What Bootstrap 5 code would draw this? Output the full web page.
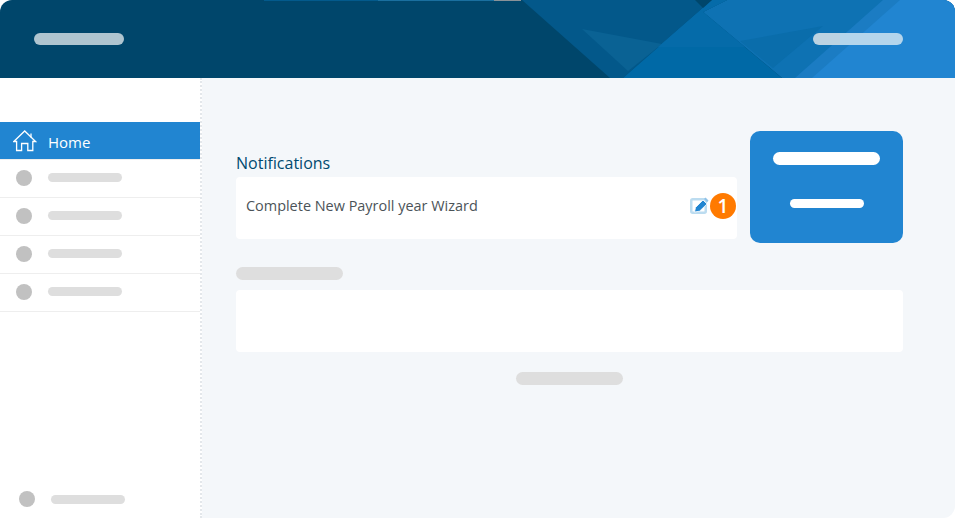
<!DOCTYPE html>
<html lang="en">
<head>
    <meta charset="UTF-8">
    <meta name="viewport" content="width=device-width, initial-scale=1.0">
    <title>Home</title>
    <link href="https://cdn.jsdelivr.net/npm/bootstrap@5.3.0/dist/css/bootstrap.min.css" rel="stylesheet">

    <style>
        html, body {
            height: 100%;
            overflow: hidden;
            background: #fff;
        }
        body {
            font-family: "Open Sans", sans-serif;
        }
        .app-shell {
            width: 955px;
            height: 518px;
        }
        .top-bar {
            height: 78px;
            padding: 0 52px 0 34px;
            background: #00466b;
            border-radius: 12px 12px 0 0;
            overflow: hidden;
        }
        .top-art {
            position: absolute;
            top: 0;
            left: 0;
        }
        .top-pill {
            position: relative;
            width: 90px;
            height: 12px;
            border-radius: 6px;
            background: linear-gradient(90deg, #bcd3e2 0 27px, #b4d5ec 27px);
        }
        .top-pill-left {
            background: #afc5d0;
        }
        .side-bar {
            width: 202px;
            padding-top: 44px;
            border-right: 2px dotted #e3e7eb;
        }
        .side-item {
            height: 38px;
            padding-left: 16px;
            padding-bottom: 2px;
            border-bottom: 1px solid #eeeeee;
        }
        .side-home {
            padding-left: 13px;
            padding-bottom: 0;
            background: #2185d1;
            color: #fff;
            font-size: 15px;
        }
        .side-home svg {
            margin-right: 11px;
        }
        .side-home span {
            margin-top: 3px;
        }
        .side-foot {
            padding: 0 0 11px 19px;
        }
        .dot-grey {
            width: 16px;
            height: 16px;
            border-radius: 50%;
            background: #c1c1c1;
        }
        .bar-grey {
            width: 74px;
            height: 9px;
            margin-left: 16px;
            border-radius: 5px;
            background: #dedede;
        }
        .main-area {
            padding: 53px 52px 0 34px;
            background: #f4f7fa;
            border-radius: 0 0 12px 0;
        }
        .notif-col {
            padding-top: 22px;
        }
        .notif-title {
            margin: 0 0 4px;
            font-size: 16px;
            line-height: 20px;
            font-weight: 400;
            color: #004a70;
        }
        .notif-card {
            height: 62px;
            padding: 0 1px 4px 10px;
            background: #fff;
            border-radius: 4px;
            font-size: 14.45px;
            color: #4b5358;
        }
        .notif-count {
            width: 26px;
            height: 26px;
            margin-left: 1px;
            border-radius: 50%;
            background: #ff7a00;
            color: #fff;
            font-size: 19px;
            font-weight: 600;
            line-height: 26px;
            text-align: center;
        }
        .blue-tile {
            width: 153px;
            height: 112px;
            margin-left: 13px;
            padding-top: 21px;
            background: #2185d1;
            border-radius: 10px;
        }
        .tile-line-a {
            width: 107px;
            height: 13px;
            border-radius: 7px;
            background: #fff;
        }
        .tile-line-b {
            width: 74px;
            height: 9px;
            margin-top: 34px;
            border-radius: 5px;
            background: #fff;
        }
        .bar-wide {
            width: 107px;
            height: 13px;
            border-radius: 7px;
            background: #dedede;
        }
        .bar-first {
            margin-top: 24px;
        }
        .empty-card {
            height: 62px;
            margin: 10px 0 20px;
            background: #fff;
            border-radius: 4px;
        }
    </style>
</head>
<body>
    <div class="app-shell d-flex flex-column">
        <header class="top-bar position-relative d-flex justify-content-between align-items-center flex-shrink-0">
            <svg class="top-art" width="955" height="78" viewBox="0 0 955 78" aria-hidden="true">
                <rect x="264" y="0" width="114" height="1" fill="#035a8c"/>
                <rect x="378" y="0" width="116" height="1" fill="#1a6f9f"/>
                <rect x="494" y="0" width="27" height="1" fill="#8a9298"/>
                <polygon points="522,0 712,0 623,78 610,78" fill="#03588a"/>
                <polygon points="582,29 662,44 628,71" fill="#0a6294"/>
                <polygon points="727,0 955,0 955,78 782,78 703,12" fill="#0e72b3"/>
                <polygon points="712,0 727,0 703,12 782,78 623,78" fill="#0069a6"/>
                <polygon points="712,0 727,0 703,12 745,47 658,47" fill="#056ba9"/>
                <polygon points="695,0 712,0 703,8" fill="#00466b"/>
                <polygon points="740,41 823,26 773,68" fill="#0a6dab"/>
                <polygon points="883,0 955,0 955,78 795,78" fill="#1b7cc3"/>
                <polygon points="900,0 955,0 955,78 812,78" fill="#2185d1"/>
            </svg>
            <div class="top-pill top-pill-left"></div>
            <div class="top-pill"></div>
        </header>

        <div class="d-flex flex-grow-1">
            <aside class="side-bar d-flex flex-column flex-shrink-0">
                <div class="side-item side-home d-flex align-items-center">
                    <svg width="24" height="22" viewBox="0 0 24 22" fill="none" stroke="#fff" stroke-width="1.3" aria-hidden="true">
                        <path d="M0.8 11.5 L11.7 1 L22.6 11.5 H19.8 V20.5 H14.8 V13.5 H8.6 V20.5 H3.6 V11.5 Z"/>
                        <path d="M18 7.5 V3.5"/>
                    </svg>
                    <span>Home</span>
                </div>
                <div class="side-item d-flex align-items-center"><div class="dot-grey"></div><div class="bar-grey"></div></div>
                <div class="side-item d-flex align-items-center"><div class="dot-grey"></div><div class="bar-grey"></div></div>
                <div class="side-item d-flex align-items-center"><div class="dot-grey"></div><div class="bar-grey"></div></div>
                <div class="side-item d-flex align-items-center"><div class="dot-grey"></div><div class="bar-grey"></div></div>
                <div class="side-foot d-flex align-items-center mt-auto"><div class="dot-grey"></div><div class="bar-grey"></div></div>
            </aside>

            <main class="main-area flex-grow-1">
                <div class="d-flex">
                    <div class="flex-grow-1 align-self-start notif-col">
                        <h2 class="notif-title">Notifications</h2>
                        <div class="notif-card d-flex align-items-center">
                            <span class="flex-grow-1">Complete New Payroll year Wizard</span>
                            <svg width="20" height="18" viewBox="0 0 20 18" fill="none" aria-hidden="true">
                                <rect x="2.25" y="2.25" width="14.5" height="13.5" rx="1.5" stroke="#bcdcf0" stroke-width="2.5"/>
                                <polygon points="5.5,15 6.5,10.5 14,3 18,7 10.5,14.2" fill="#2185d1" stroke="#fff" stroke-width="0.8"/>
                                <polygon points="15,2 16.5,0.5 19.5,3.5 18.2,5.2" fill="#8fc2e8"/>
                            </svg>
                            <div class="notif-count">1</div>
                        </div>
                    </div>
                    <div class="blue-tile d-flex flex-column align-items-center flex-shrink-0">
                        <div class="tile-line-a"></div>
                        <div class="tile-line-b"></div>
                    </div>
                </div>
                <div class="bar-wide bar-first"></div>
                <div class="empty-card"></div>
                <div class="bar-wide mx-auto"></div>
            </main>
        </div>
    </div>
    <script src="https://cdn.jsdelivr.net/npm/bootstrap@5.3.0/dist/js/bootstrap.bundle.min.js"></script>
</body>
</html>
